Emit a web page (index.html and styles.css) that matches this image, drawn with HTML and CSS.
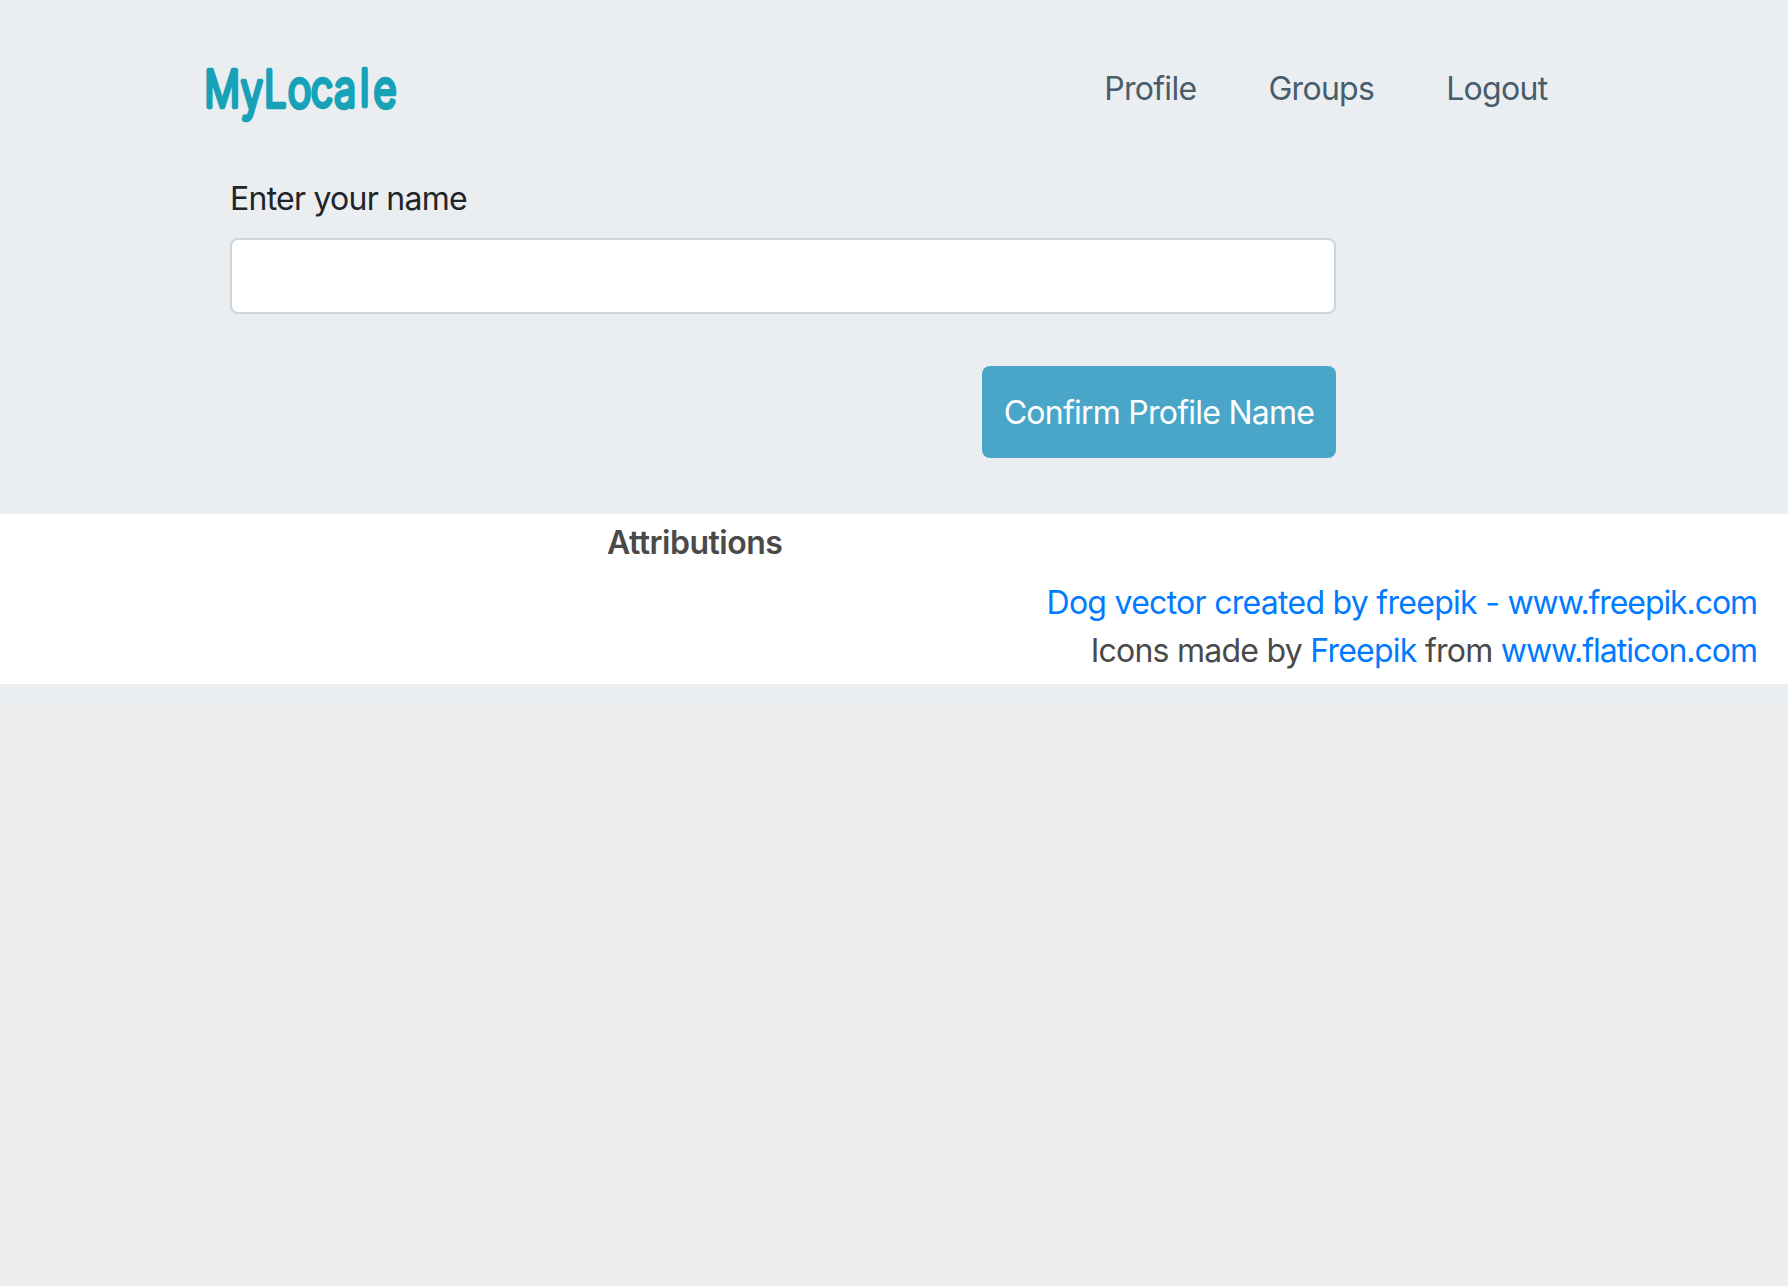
FILE: index.html
```html
<!DOCTYPE html>
<html lang="en">
<head>
<meta charset="utf-8">
<title>MyLocale</title>
<link rel="stylesheet" href="styles.css">
</head>
<body>
<div class="page">
<header class="navbar">
  <a class="brand" href="#">
    <svg class="brand-mark" width="210" height="76" viewBox="0 0 210 76" role="img" aria-label="MyLocale">
      <text class="brand-text" transform="scale(0.78 1)" y="49" x="5.5 52.3 82 112.5 142 172 205 222.5" dy="0 2 -2 0 0 0 -1 1">MyLocale</text>
    </svg>
  </a>
  <nav class="nav-links">
    <a href="#">Profile</a>
    <a href="#">Groups</a>
    <a href="#">Logout</a>
  </nav>
</header>
<main class="profile-form">
  <label class="field-label" for="name">Enter your name</label>
  <input class="field-input" id="name" type="text">
  <button class="confirm" type="button">Confirm Profile Name</button>
</main>
<footer class="footer">
  <h2 class="footer-title">Attributions</h2>
  <div class="credits">
    <a class="credit-dog" href="#">Dog vector created by freepik - <span class="domain domain-freepik">www.freepik.com</span></a>
    <div class="credit-icons">Icons made by <a href="#">Freepik</a> from <a class="domain" href="#">www.flaticon.com</a></div>
  </div>
</footer>
</div>
</body>
</html>
```

FILE: styles.css
```css
* { box-sizing: border-box; }
body {
  margin: 0;
  background: #edeef0;
  color: #212529;
  font: 32px/48px Inter, "Liberation Sans", sans-serif;
  letter-spacing: -0.75px;
}
a { color: #007bff; text-decoration: none; }
.page { height: 702px; background: #eaeef1; }
.navbar {
  display: flex;
  justify-content: space-between;
  height: 174px;
  padding: 58px 240.5px 0 200px;
}
.brand-mark { display: block; }
.brand-text {
  font: 300 51px Inter, sans-serif;
  letter-spacing: 0;
  fill: #17a2b8;
  stroke: #17a2b8;
  stroke-width: 4.4;
  stroke-linejoin: round;
}
.nav-links { display: flex; gap: 72px; padding-top: 7px; letter-spacing: -0.7px; }
.nav-links a { color: #495c6b; }
.profile-form {
  display: flex;
  flex-direction: column;
  width: 1106px;
  height: 340px;
  margin-left: 230px;
}
.field-label { height: 64px; padding-top: 1px; }
.field-input {
  height: 76px;
  padding: 12px 24px;
  border: 2px solid #ced4da;
  border-radius: 8px;
  background: #fff;
  font: inherit;
}
.confirm {
  align-self: flex-end;
  width: 354px;
  height: 92px;
  margin-top: 52px;
  padding: 2px 0 0;
  border: 0;
  border-radius: 8px;
  background: #49a6c8;
  color: #fff;
  font: inherit;
  letter-spacing: inherit;
  white-space: nowrap;
}
.footer {
  height: 170px;
  padding: 5px 31px 0 0;
  background: #fff;
  color: #4a4a4a;
}
.footer-title {
  margin: 0 0 12px 607px;
  font: inherit;
  font-weight: 600;
  letter-spacing: -0.5px;
}
.credits { text-align: right; }
.credit-dog { display: block; letter-spacing: -0.72px; }
.domain { letter-spacing: -1px; }
.domain-freepik { letter-spacing: -1.08px; }
```
